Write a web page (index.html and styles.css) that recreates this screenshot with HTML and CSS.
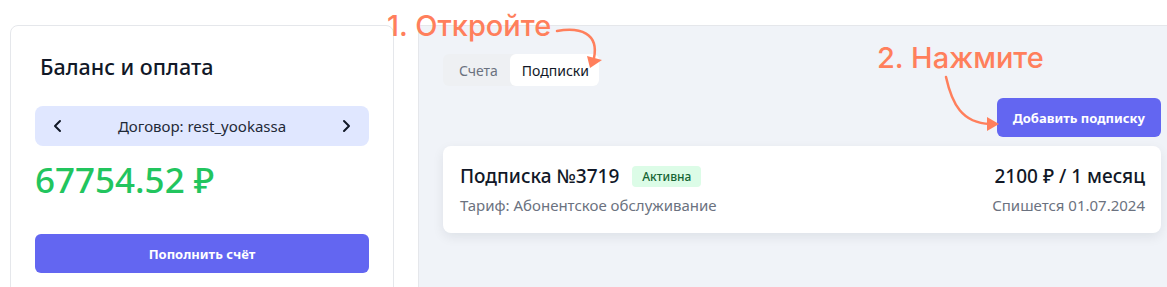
FILE: index.html
```html
<!DOCTYPE html>
<html lang="ru">
<head>
<meta charset="UTF-8"><meta name="viewport" content="width=device-width, initial-scale=1">
<title>Баланс и подписки</title>
<link rel="stylesheet" href="styles.css">
</head>
<body>
  <div class="page">
    <div class="balance">
      <h2 class="balance-title">Баланс и оплата</h2>
      <div class="contract">
        <svg class="chev" width="14" height="14" viewBox="0 0 14 14"><path d="M9 2 L4 7 L9 12" fill="none" stroke="#111827" stroke-width="2" stroke-linecap="round" stroke-linejoin="round"/></svg>
        <span>Договор: rest_yookassa</span>
        <svg class="chev" width="14" height="14" viewBox="0 0 14 14"><path d="M5 2 L10 7 L5 12" fill="none" stroke="#111827" stroke-width="2" stroke-linecap="round" stroke-linejoin="round"/></svg>
      </div>
      <div class="amount">67754.52 ₽</div>
      <button class="btn btn-wide">Пополнить счёт</button>
    </div>

    <div class="main">
      <div class="tabs">
        <div class="tab">Счета</div>
        <div class="tab active">Подписки</div>
      </div>
      <div class="actions">
        <button class="btn btn-add">Добавить подписку</button>
      </div>
      <div class="sub">
        <div class="sub-left">
          <div class="sub-head">
            <span class="sub-name">Подписка №3719</span>
            <span class="badge">Активна</span>
          </div>
          <div class="muted">Тариф: Абонентское обслуживание</div>
        </div>
        <div class="sub-right">
          <div class="sub-price">2100 ₽ / 1 месяц</div>
          <div class="muted">Спишется 01.07.2024</div>
        </div>
      </div>
    </div>
  </div>

  <!-- подсказки поверх скриншота -->
  <span class="note note1">1. Откройте</span>
  <span class="note note2">2. Нажмите</span>
  <svg class="arrows" width="1167" height="287" viewBox="0 0 1167 287">
    <path d="M557 31 C 580 27, 599 33, 594 58" fill="none" stroke="#ff7f5c" stroke-width="2.5" stroke-linecap="round"/>
    <polygon points="587,56 602,60 590,68" fill="#ff7f5c"/>
    <path d="M946 77 C 952 104, 962 123, 990 124" fill="none" stroke="#ff7f5c" stroke-width="2.5" stroke-linecap="round"/>
    <polygon points="987,117 987,131 999,124" fill="#ff7f5c"/>
  </svg>
</body>
</html>
```

FILE: styles.css
```css
body{margin:0;background:#fff;font-family:"Noto Sans",Arial,sans-serif;color:#111827;overflow:hidden}
.page{display:flex;gap:24px;padding:25px 0 0 10px;height:262px;overflow:hidden}
.balance{width:334px;border:1px solid #e5e7eb;border-radius:8px;padding:24px 24px;flex:none;height:300px}
.balance-title{margin:3px 0 25px 5px;font-size:21.5px;line-height:28px;font-weight:500}
.contract{display:flex;align-items:center;justify-content:space-between;height:40px;padding:0 16px;background:#e0e7ff;border-radius:8px;font-size:15px;color:#1f2937}
.chev{display:block}
.amount{margin-top:12px;font-size:35px;line-height:44px;font-weight:500;color:#22c55e}
.btn{border:none;border-radius:6px;background:#6366f1;color:#fff;font-family:inherit;font-size:13px;font-weight:700;cursor:pointer}
.btn-wide{display:block;width:100%;height:39px;margin-top:32px}
.main{flex:1;background:#f0f3f8;border-top:1px solid #e5e7eb;border-left:1px solid #e5e7eb;padding:28px 6px 0 24px}
.tabs{display:inline-flex;height:32px;background:#eef0f3;border-radius:6px;font-size:14px}
.tab{display:flex;align-items:center;padding:0 12px 0 16px;color:#6b7280}
.tab.active{background:#fff;color:#111827;border-radius:6px;padding:0 10px 0 12px}
.actions{display:flex;justify-content:flex-end;margin-top:12px}
.btn-add{height:39px;padding:0 16px}
.sub{display:flex;justify-content:space-between;margin-top:9px;height:87px;box-sizing:border-box;padding:16px 16px 0 17px;background:#fff;border-radius:8px;box-shadow:0 4px 12px rgba(15,23,42,.08)}
.sub-head{display:flex;align-items:center;gap:13px;height:28px}
.sub-name{font-size:19px;font-weight:500}
.badge{background:#dcfce7;color:#166534;font-size:12px;font-weight:500;padding:2px 10px;border-radius:4px}
.muted{margin-top:5px;font-size:15px;color:#6b7280}
.sub-right{text-align:right}
.sub-price{height:28px;line-height:28px;font-size:19px;font-weight:500}
.note{position:absolute;font-family:Inter,"Noto Sans",sans-serif;font-size:29px;font-weight:500;color:#ff7f5c;line-height:1}
.note1{left:387px;top:11px}
.note2{left:877px;top:43px}
.arrows{position:absolute;left:0;top:0;pointer-events:none}
```
